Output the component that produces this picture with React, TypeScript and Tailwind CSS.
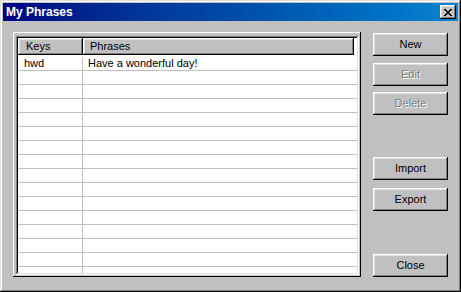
import React from "react";

const raised =
  "shadow-[inset_-1px_-1px_0_#000,inset_1px_1px_0_#fff,inset_-2px_-2px_0_#808080,inset_2px_2px_0_#dfdfdf]";

const ROWS = [{ key: "hwd", phrase: "Have a wonderful day!" }];

export default function App() {
  return (
    <div className="w-[461px] h-[292px] bg-[#c0c0c0] font-['Liberation_Sans',Arial,sans-serif] text-[11px] text-black select-none">
      <div className="w-full h-full flex flex-col p-[3px] shadow-[inset_-1px_-1px_0_#000,inset_1px_1px_0_#dfdfdf,inset_-2px_-2px_0_#808080,inset_2px_2px_0_#fff]">
        {/* TITLE BAR */}
        <div className="h-[18px] shrink-0 flex items-center justify-between bg-gradient-to-r from-[#000080] to-[#1084d0] pl-[3px] pr-[2px]">
          <span className="text-white font-bold text-[12px] leading-none">
            My Phrases
          </span>
          <button
            className={`w-4 h-[14px] bg-[#c0c0c0] flex items-center justify-center ${raised}`}
          >
            <svg width="8" height="7" viewBox="0 0 8 7" shapeRendering="crispEdges">
              <path
                d="M0 0h2v1h-2zM6 0h2v1h-2zM1 1h2v1h-2zM5 1h2v1h-2zM2 2h4v1h-4zM3 3h2v1h-2zM2 4h4v1h-4zM1 5h2v1h-2zM5 5h2v1h-2zM0 6h2v1h-2zM6 6h2v1h-2z"
                fill="#000"
              />
            </svg>
          </button>
        </div>

        {/* BODY */}
        <div className="flex-1 min-h-0 flex pl-[10px] pr-[10px] pt-[11px] pb-[12px] gap-[12px]">
          {/* LIST FRAME */}
          <div className="w-[348px] pt-[4px] pl-[3px] pr-[2px] pb-[2px] shadow-[inset_-1px_-1px_0_#000,inset_1px_1px_0_#fff]">
            <div className="w-full h-full p-[2px] shadow-[inset_-1px_-1px_0_#fff,inset_1px_1px_0_#808080,inset_-2px_-2px_0_#dfdfdf,inset_2px_2px_0_#000]">
              <div className="w-full h-full bg-white overflow-hidden flex flex-col">
                {/* HEADER */}
                <div className="flex h-[17px] shrink-0">
                  <div className={`w-[65px] bg-[#c0c0c0] pl-[8px] flex items-center ${raised}`}>
                    Keys
                  </div>
                  <div className={`w-[271px] bg-[#c0c0c0] pl-[7px] flex items-center ${raised}`}>
                    Phrases
                  </div>
                </div>
                {/* ROWS */}
                <div className="pt-[2px] flex flex-col min-h-0">
                  {Array.from({ length: 16 }).map((_, i) => {
                    const r = ROWS[i];
                    return (
                      <div key={i} className="flex h-[14px] shrink-0 border-b border-[#c0c0c0]">
                        <div className="w-[65px] pl-[6px] leading-[13px] border-r border-[#c0c0c0]">
                          {r?.key}
                        </div>
                        <div className="flex-1 pl-[5px] leading-[13px]">{r?.phrase}</div>
                      </div>
                    );
                  })}
                </div>
              </div>
            </div>
          </div>

          {/* BUTTONS */}
          <div className="flex flex-col pt-[1px] w-[75px]">
            <WinButton label="New" />
            <WinButton label="Edit" disabled className="mt-[7px]" />
            <WinButton label="Delete" disabled className="mt-[6px]" />
            <WinButton label="Import" className="mt-[42px]" />
            <WinButton label="Export" className="mt-[8px]" />
            <WinButton label="Close" className="mt-auto" />
          </div>
        </div>
      </div>
    </div>
  );
}

function WinButton({
  label,
  disabled,
  className = "",
}: {
  label: string;
  disabled?: boolean;
  className?: string;
}) {
  return (
    <button
      className={`w-[75px] h-[23px] shrink-0 bg-[#c0c0c0] flex items-center justify-center ${raised} ${
        disabled ? "text-[#808080] [text-shadow:1px_1px_0_#fff]" : "text-black"
      } ${className}`}
    >
      {label}
    </button>
  );
}
